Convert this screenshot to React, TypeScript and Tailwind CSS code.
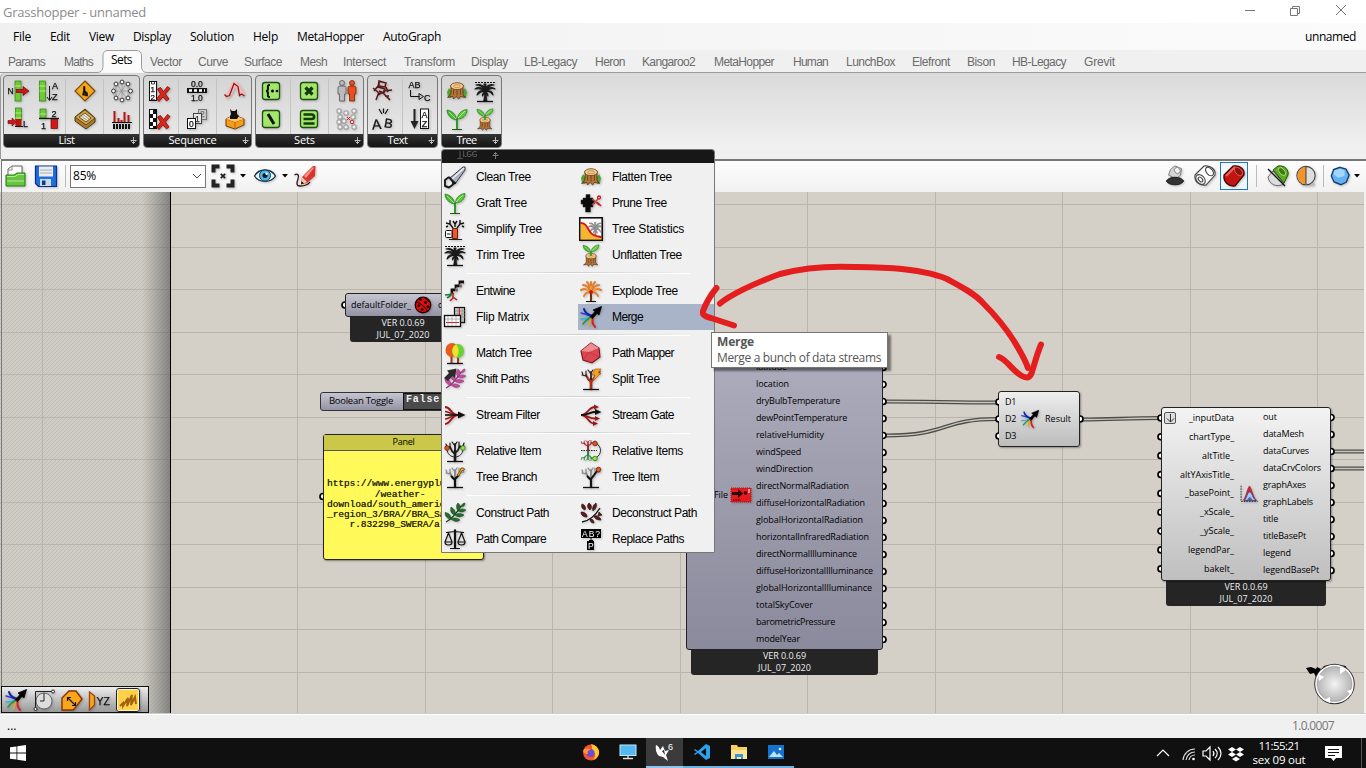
import React from "react";

let ruler: CanvasRenderingContext2D | null = null;

/** A run of text tracked so that it fills the given width. */
function Fit({ t, w, font, className = "" }: { t: string; w: number; font: string; className?: string }) {
  if (!ruler) ruler = document.createElement("canvas").getContext("2d");
  ruler!.font = font;
  const spacing = (w - ruler!.measureText(t).width) / t.length;
  return (
    <span className={"inline-block whitespace-pre " + className} style={{ font, letterSpacing: spacing, width: w, lineHeight: "16px" }}>
      {t}
    </span>
  );
}

const UI = '12px "Open Sans", sans-serif';
const SANS = '12px "Liberation Sans", sans-serif';
const NODE = '9px "Open Sans", sans-serif';

const leafPair = (
  <g>
    <path d="M11.500 13C6 12 2 8 2 3c5 1 9 4 9.500 10Z" fill="#49b834" stroke="#1c7a1c" strokeWidth=".7" />
    <path d="M12.500 12c0-5 4-9 9.500-9.500C22 8 18 12 12.500 12Z" fill="#5cc93f" stroke="#1c7a1c" strokeWidth=".7" />
    <path d="M4 5l7 7M20 4l-7 7" stroke="#b4ef83" strokeWidth=".9" />
  </g>
);
const bareTree = (c: string) => (
  <g fill="none" stroke={c} strokeLinecap="round">
    <path d="M12 22V12" strokeWidth="2.6" />
    <path d="M12 15C9 13 8 11 7 8M12 14c3-2 4-4 5-7M12 12V5" strokeWidth="1.8" />
    <path d="M7 9L3 8M7 8V4M17 8l4-1M16 8l0-5M12 7l-3-4M12 6l2-3M4 8L3 5M20 7l1-3" strokeWidth="1.2" />
  </g>
);
const ground = <path d="M4 22.500h16" stroke="#111" strokeWidth="1.300" />;
const palm = (c: string) => (
  <g fill={c} stroke={c} strokeLinejoin="round">
    <path d="M10.500 22c1-4 1-8 .5-11h2c.5 4 .5 7 1 11Z" strokeWidth=".5" />
    <path d="M12 11C9 8 5 7.500 2 10c4-1 7 0 9 2-3-1-6 0-7 4 3-3 6-4 8-3-2 1-3 2-2.500 4 1-2 2-3 2.500-3 .5 0 2 1 3 3 0-2-1-3-2-4 2-1 5 0 7 3 0-3-3-5-6-4 2-2 5-3 8-2-2-2-6-2-8 0 2-3 4-4 7-4-3-1-7 0-9 4 0-2 1-4 1-5l-2 0c0 1 0 3 1 5-2-4-5-5-9-4 4 0 7 2 8 4Z" strokeWidth="1.100" />
  </g>
);
const stump = (y: number, s: number) => (
  <g transform={`translate(${12 - 12 * s} ${y}) scale(${s})`}>
    <path d="M5 5v9c-1 3-2 4-4 5l6-1 1 3 3-3 3 3 2-3 6 1c-3-2-3-3-3-6V5Z" fill="#b3743a" stroke="#532c0c" strokeWidth=".9" />
    <path d="M8 10v6M12 10v7M16 9v7" stroke="#6b3f18" strokeWidth="1" />
    <ellipse cx="12" cy="6" rx="7.500" ry="4" fill="#efca8a" stroke="#6d3d12" strokeWidth=".9" />
    <ellipse cx="12" cy="6" rx="3.800" ry="1.800" fill="none" stroke="#b98046" strokeWidth=".8" />
  </g>
);
const branch = (c: string, d: string) => (
  <g>
    <path d="M3 21C9 18 13 13 18 5" fill="none" stroke={d} strokeWidth="1.300" />
    <path
      d="M8 18C4 18 2 15 2 11.500 6 12 8 14 8 18ZM12 14c-4-1-5-4-4-8 3 2 5 4 4 8ZM15 10c-2-3-2-6 0-8 3 3 3 5 0 8ZM8 18c3 3 7 3 9 1-2-2-6-3-9-1ZM12 14c3 3 7 2 9 0-3-2-7-2-9 0ZM15 10c3 2 6 1 8-1-3-2-6-1-8 1ZM18 6c0-2 2-4 4-4 0 3-2 4-4 4Z"
      fill={c}
      stroke={d}
      strokeWidth=".5"
    />
  </g>
);
const mergeShape = (
  <g fill="none" strokeLinecap="round">
    <path d="M2 8c4 1 8 2 11 4" stroke="#2f3fe0" strokeWidth="1.400" />
    <path d="M2 14c4 0 8-1 11-2" stroke="#2bb5d8" strokeWidth="1.400" />
    <path d="M4 19c3-4 6-6 9-7" stroke="#1d9c2c" strokeWidth="1.600" />
    <path d="M10 21c0-4 1-6 4-9" stroke="#eda11d" strokeWidth="1.500" />
    <path d="M16 22c-3-3-3-7-2-11" stroke="#dd1f1f" strokeWidth="2" />
    <path d="M5 4c1 4 4 6 9 7" stroke="#1423a5" strokeWidth="2" />
    <path d="M11.500 11.500l4.500-5-2-1.500L22.500 1.500 20 10l-2-1.500L13.500 13.500Z" fill="#000" stroke="#000" strokeWidth=".8" strokeLinejoin="round" />
  </g>
);
const redX = (
  <path d="M10.500 10l3-1.500 3 4 4-5 2.500 2-4.500 5.500 3.500 5-2.500 2-3.500-4-4 4.500-2.500-2.500 4-5Z" fill="#d7261d" stroke="#7a0c08" strokeWidth=".8" />
);
const greenTile = (inner: React.ReactNode) => (
  <g>
    <rect x="3.500" y="3.500" width="17" height="17" rx="2.500" fill="#a3e66b" stroke="#1d4d14" strokeWidth="1.300" />
    {inner}
  </g>
);
const greenCells = (x: number, y: number, h: number) => (
  <g>
    <rect x={x} y={y} width="6" height={h} fill="#6ecb35" stroke="#2e7f16" strokeWidth=".7" />
    <path d={`M${x} ${y + 5}h6M${x} ${y + 10}h6`} stroke="#b4f07f" strokeWidth="1" />
  </g>
);
const gl = (x: number, y: number, s: string, size = 9, fill = "#111") => (
  <text x={x} y={y} fontSize={size} fill={fill} stroke={fill} strokeWidth=".25" fontFamily="Liberation Sans, sans-serif">
    {s}
  </text>
);

const art: Record<string, React.ReactNode> = {
  saw: (
    <g>
      <path d="M7 13L20 2l2 0v3L12 19Z" fill="#aab0bd" stroke="#343a48" strokeWidth="1" />
      <path d="M9 14L21 3" stroke="#e8edf5" strokeWidth="1.600" />
      <path d="M6 12L2 15v6l4 1.500 4-3v-3l3 2" fill="none" stroke="#1a1a1a" strokeWidth="1.900" strokeLinejoin="round" />
      <path d="M6 12l6 7" stroke="#1a1a1a" strokeWidth="2" />
    </g>
  ),
  graft: (
    <g>
      <path d="M12 22V12" stroke="#2f9a26" strokeWidth="2" />
      {leafPair}
      <path d="M7 22.500h10" stroke="#245a1c" strokeWidth="1" />
    </g>
  ),
  simplify: (
    <g>
      <g fill="none" stroke="#111" strokeWidth="1.400">
        <path d="M10 11L7 7 3 6M7 7V3M5 9L3 10M14 11l3-4 4-1M17 7V3M19 9l2 1M12 10V7l-2-3M12 7l2-3" />
      </g>
      <path d="M9.500 21.500V11.500h5v10Z" fill="#ea5731" stroke="#7a1d0b" />
      <rect x="2.500" y="13.500" width="6.500" height="7" rx="1" fill="#fff" stroke="#111" />
      <path d="M4 17h3.500" stroke="#111" />
      <path d="M6 22.500h13" stroke="#222" />
    </g>
  ),
  trim: (
    <g>
      <path d="M2 3.500h20" stroke="#111" strokeWidth="1.200" strokeDasharray="2 1" />
      {palm("#191919")}
      {ground}
    </g>
  ),
  flatten: (
    <g>
      <path d="M4 9l-2 4 1 5 3 1 1-6ZM20 9l2 4-1 5-3 1-1-6Z" fill="#4ba535" />
      {stump(2, 0.86)}
    </g>
  ),
  prune: (
    <g>
      <path d="M6.500 21v-5H4v-3H2V9h2V7h3V3.500h4V7h3v2h1.500v4H14v3h-2.500v5Z" fill="#0a0a0a" stroke="#333" strokeWidth=".5" />
      <path d="M13 8l7 6M13 14l6-6" stroke="#b54040" strokeWidth="1.400" />
      <circle cx="20" cy="6.500" r="1.500" fill="none" stroke="#c81c1c" strokeWidth="1.300" />
      <path d="M18 11l4 4" stroke="#c81c1c" strokeWidth="1.600" />
    </g>
  ),
  stats: (
    <g>
      <rect x=".7" y=".7" width="22.600" height="22.600" fill="#fafafa" stroke="#111" strokeWidth="1.300" />
      <g transform="translate(8 1) scale(.68 .9)">{palm("#8c8c8c")}</g>
      <path d="M1.500 6c5 0 6 3 9 8s6 5 12 6v3h-21Z" fill="#f4b530" />
      <path d="M1.500 6c5 0 6 3 9 8s6 5 12 6" fill="none" stroke="#d71414" strokeWidth="1.800" />
      <rect x=".7" y=".7" width="22.600" height="22.600" fill="none" stroke="#111" strokeWidth="1.300" />
    </g>
  ),
  unflatten: (
    <g>
      {stump(9, 0.68)}
      <path d="M12 13V8" stroke="#2f9a26" strokeWidth="1.600" />
      <g transform="translate(2.400 0) scale(.8 .72)">{leafPair}</g>
    </g>
  ),
  entwine: (
    <g fill="none">
      <path d="M21 3h-4v4h-4v4H9v4" stroke="#111" strokeWidth="2.800" />
      <path d="M20 5h-3v4h-4v4h-3" stroke="#f6d6c8" strokeWidth=".8" />
      <path d="M9 14c-2 3-4 1-7 2M9 14c-1 4-4 4-5 5" stroke="#217a3c" strokeWidth="1.600" />
      <path d="M10 14v5l-3 3M10 18l4 3" stroke="#b92020" strokeWidth="1.500" />
    </g>
  ),
  flip: (
    <g>
      <rect x="11.500" y="2.500" width="10" height="15" fill="#ccc" stroke="#111" strokeWidth="1.200" />
      <path d="M12 6h10M12 9h10M12 12h10M15 3v14M19 3v14" stroke="#888" strokeWidth=".7" />
      <path d="M16.500 3v7" stroke="#c22" />
      <rect x="1.500" y="10.500" width="16" height="11" fill="#fff" stroke="#111" strokeWidth="1.300" />
      <path d="M5 11v10M9 11v10M13 11v10M2 14h15" stroke="#999" strokeWidth=".7" />
      <path d="M3 17.500h13" stroke="#d22" />
    </g>
  ),
  explode: (
    <g>
      <path d="M12 22v-9" stroke="#6f3311" strokeWidth="2" />
      <g fill="none" stroke="#e67d2c" strokeWidth="2" strokeLinecap="round">
        <path d="M12 13C9 10 6 9 2 11M12 13c3-3 6-4 10-2M12 13C10 8 7 6 4 6M12 13c2-5 5-7 8-7M12 13C11 8 10 5 8 3M12 13c1-5 2-8 4-10M12 13V3M12 13c-4 0-6 1-7 4M12 13c4 0 6 1 7 4" />
      </g>
      <path d="M12 13l-6-4M12 13l6-4M12 12V7" stroke="#f7ae43" />
      <circle cx="12" cy="13" r="2" fill="#c21e0e" />
      <path d="M7 22.500h10" stroke="#111" />
    </g>
  ),
  merge: mergeShape,
  match: (
    <g>
      <path d="M8.500 13v9M15 14v8" stroke="#a2381b" strokeWidth="2" />
      <ellipse cx="9" cy="9" rx="6.500" ry="7" fill="#e75c1c" />
      <ellipse cx="15" cy="10" rx="6" ry="7" fill="#67d231" />
      <path d="M13 3.500c3.500 3 3.500 10 0 13-5-3-5-10 0-13Z" fill="#f5df2c" />
      {ground}
    </g>
  ),
  shift: (
    <g>
      {branch("#c04d9f", "#8c246c")}
      <path d="M1 11l5-5-2-2.500 9.500-2L12 11 9.500 9 5 14Z" fill="#2b2b2b" />
    </g>
  ),
  mapper: (
    <g>
      <path d="M12 2l8 5 1 9-8 6-9-3-2-9Z" fill="#dc4650" stroke="#71161b" strokeWidth="1.100" />
      <path d="M12 2l8 5-10 4-8-1Z" fill="#f08c90" />
      <path d="M10 11l10 5M10 11L4 19" stroke="#b8353d" strokeWidth=".8" />
    </g>
  ),
  split: (
    <g>
      {bareTree("#3b2222")}
      <path d="M12 22v-8M12 15l4-4M12 15L8 10" stroke="#c62d12" strokeWidth="1.800" />
      <path d="M16 2h6l-3 4h3l-8 8 2-6h-3Z" fill="#f6a01f" stroke="#b75d0a" strokeWidth=".7" />
      {ground}
    </g>
  ),
  filter: (
    <g fill="none" strokeWidth="2">
      <path d="M2 4c6 0 6 8 13 8M2 21c6 0 6-9 13-9" stroke="#9a1818" />
      <path d="M2 8.500c5 0 6 3.500 12 3.500M2 16c5 0 6-4 12-4" stroke="#9a1818" strokeWidth="1.600" />
      <path d="M2 12h14" stroke="#111" strokeWidth="1.600" />
      <path d="M15 8.500l7.500 3.500-7.500 3.500Z" fill="#111" />
    </g>
  ),
  gate: (
    <g fill="none" strokeWidth="1.800">
      <path d="M2 12c7 0 7-8 14-8M2 12c7 0 7 3.500 14 3.500M2 12c7 0 7 8.500 13 8.500" stroke="#9a1818" />
      <path d="M2 12c7 0 9-3 14-3" stroke="#111" strokeWidth="2" />
      <path d="M15 1.500l5 2.500-5 2.500ZM16 13l5 2.500-5 2.500ZM14 18l5 2.500-5 2.500Z" fill="#9a1818" />
      <path d="M16 6l6.500 3-6.500 3Z" fill="#111" />
    </g>
  ),
  relitem: (
    <g>
      {bareTree("#191919")}
      <path d="M4 10c0 5 4 8 8 8s8-3 8-8" fill="none" stroke="#222" />
      <circle cx="4" cy="9" r="2.300" fill="#ea5425" stroke="#6b1e08" strokeWidth=".8" />
      <circle cx="20" cy="9" r="2.300" fill="#8ee83d" stroke="#2f6e0b" strokeWidth=".8" />
      {ground}
    </g>
  ),
  relitems: (
    <g>
      <g transform="translate(0 0) scale(.75 .5)">{bareTree("#a02525")}</g>
      <g transform="translate(0 23) scale(.75 -.5)">{bareTree("#26853d")}</g>
      <path d="M2 11.500h16" stroke="#222" strokeDasharray="1.500 1" />
      <path d="M17 4c6 4 6 11 0 15" fill="none" stroke="#222" />
      <circle cx="16" cy="4.500" r="2.300" fill="#ea5425" stroke="#6b1e08" strokeWidth=".8" />
      <circle cx="16" cy="19.500" r="2.300" fill="#8ee83d" stroke="#2f6e0b" strokeWidth=".8" />
    </g>
  ),
  tbranch: (
    <g>
      {bareTree("#888")}
      <path d="M12 22v-8l4-4M12 15l-4-4" fill="none" stroke="#111" strokeWidth="2" />
      <path d="M14 10l3-4 1-3 2.500 0 1 1.500-3 1.500-2.500 5Z" fill="#f2b32a" stroke="#7b4b06" strokeWidth=".9" />
      {ground}
    </g>
  ),
  titem: (
    <g>
      {bareTree("#888")}
      <path d="M12 22v-8l6-8M12 15l-4-4" fill="none" stroke="#111" strokeWidth="1.900" />
      <circle cx="19.500" cy="4.500" r="2.300" fill="#ea5425" stroke="#6b1e08" strokeWidth=".8" />
      {ground}
    </g>
  ),
  construct: branch("#236d2c", "#123a17"),
  deconstruct: (
    <g>
      <path d="M3 21c7-1 13-6 18-14" fill="none" stroke="#111" strokeWidth="1.400" />
      <path
        d="M3 3c3 1 4 3 3 6-3-1-4-3-3-6ZM10 2c3 2 3 5 1 7-3-2-3-5-1-7ZM17 2c1 3 0 6-3 8-1-3 0-6 3-8ZM2 11c4 0 6 2 6 5-4 0-6-2-6-5ZM15 15c3-1 6 1 7 4-4 0-6-1-7-4ZM11 18c3 0 4 2 4 4-3 0-4-2-4-4ZM20 11l3 3-4 1Z"
        fill="#5a1d1d"
        stroke="#2e0c0c"
        strokeWidth=".7"
      />
    </g>
  ),
  compare: (
    <g fill="none" stroke="#111" strokeWidth="1.200">
      <path d="M12 2v19M7 21.500h10M3 5.500c4 0 5-1 9-1s5 1 9 1M5.500 6L2 15M5.500 6L9 15M18.500 6L15 15M18.500 6L22 15" />
      <path d="M2 15c0 4 7 4 7 0ZM15 15c0 4 7 4 7 0Z" fill="#ddd" />
      <path d="M12 3v18" strokeWidth="2.200" />
    </g>
  ),
  replace: (
    <g>
      <rect x="2" y="2" width="20" height="9" fill="#000" />
      <text x="3" y="9.500" fontSize="8.500" fill="#fff" fontFamily="Liberation Sans" textLength="18">AB?</text>
      <path d="M12 11v4M10 13l2 2 2-2" stroke="#000" />
      <rect x="8" y="14" width="7" height="9" fill="#000" />
      <text x="9" y="21.500" fontSize="8.500" fill="#fff" fontFamily="Liberation Sans">P</text>
    </g>
  ),
  listitem: (
    <g>
      {greenCells(8, 2, 20)}
      {gl(0.500, 15, "N", 8.500)}
      <path d="M9 10.500h7v-3l6 4.500-6 4.500v-3H9Z" fill="#d0161a" stroke="#6d0606" strokeWidth=".7" />
    </g>
  ),
  sort: (
    <g>
      {greenCells(2.500, 2, 20)}
      <path d="M12.500 7v14M10 18l2.500 3.500 2.500-3.500" stroke="#111" fill="none" />
      {gl(15, 9.500, "A")}
      {gl(15, 20.500, "Z")}
    </g>
  ),
  weave: (
    <g>
      <path d="M12 2l10 10-10 10L2 12Z" fill="#f4a61d" stroke="#7d4b05" strokeWidth="1.200" />
      <path d="M9.500 16l1-4V7.500h1.500v4l2.500 2.500v3h-2v-2l-1-1.500v3Z" fill="#111" stroke="#111" strokeWidth=".6" />
    </g>
  ),
  net: (
    <g>
      <path d="M6 4l11 0 4 8-4 8H6L2 12ZM6 4l11 16M17 4L6 20M2 12h20M12 2v20M6 4v16M18 4v16" fill="none" stroke="#888" strokeWidth=".6" />
      {[[6, 5], [12, 3], [18, 5], [3.500, 12], [20.500, 12], [6, 19], [12, 21], [18, 19]].map(([x, y]) => (
        <circle key={x + "-" + y} cx={x} cy={y} r="1.900" fill="#fff" stroke="#222" strokeWidth=".9" />
      ))}
    </g>
  ),
  length: (
    <g>
      {greenCells(8.500, 1, 12)}
      <rect x="8.500" y="12" width="6" height="7" fill="#b81414" />
      <path d="M1 13.500h4v-2.500l4.500 4-4.500 4v-2.500H1Z" fill="#d0161a" stroke="#6d0606" strokeWidth=".6" />
      <path d="M8 19.500h8" fill="none" stroke="#111" />
      {gl(16, 19.500, "L", 9)}
    </g>
  ),
  partition: (
    <g>
      {greenCells(3, 2, 9)}
      <path d="M2 11.500h20" stroke="#111" strokeWidth="1.300" />
      <rect x="14" y="12.500" width="6.500" height="9" fill="#d41818" stroke="#710909" strokeWidth=".7" />
      {gl(14.500, 9.500, "2", 9)}
      {gl(4, 21.500, "1", 9)}
    </g>
  ),
  box3d: (
    <g>
      <path d="M2 10l10-8 10 9v4l-9 7L2 14Z" fill="#a77c2b" stroke="#50360b" />
      <path d="M2 10l10-7 10 8-9 7Z" fill="#cfa64c" stroke="#50360b" strokeWidth=".8" />
      <path d="M6 10l6-4 6 5-5 4Z" fill="#e9e4d2" stroke="#50360b" strokeWidth=".8" />
      <path d="M8 9l7 5M10 7.500l7 5" stroke="#8f8463" strokeWidth=".7" />
    </g>
  ),
  bars: (
    <g>
      <path d="M4.500 15V4M8.500 15v-4M14.500 15V5M18.500 15V8M11.500 15v-2" stroke="#b71414" strokeWidth="2" />
      <path d="M2 15.500h20" stroke="#111" />
      <path d="M3 19.500h18" stroke="#111" strokeWidth="5" strokeDasharray="2 1" />
    </g>
  ),
  cull: (
    <g>
      <rect x="2.500" y="2.500" width="7" height="19" fill="#fff" stroke="#111" />
      <path d="M4.500 3v2h3V3" fill="none" stroke="#111" strokeWidth=".8" />
      {gl(3.500, 13, "1", 8)}
      {gl(3.500, 20.500, "2", 8)}
      {redX}
    </g>
  ),
  pattern: (
    <g>
      <rect x="2.500" y="2.500" width="7" height="19" fill="#fff" stroke="#111" />
      <path d="M6 3h3v4H6zM3 7h3v4H3zM6 11h3v4H6zM3 15h3v4H3zM6 19h3v2H6z" fill="#111" />
      {redX}
    </g>
  ),
  range: (
    <g>
      {gl(6, 7.500, "0.0", 8.500)}
      <rect x="2" y="9" width="20" height="5" fill="#111" />
      <path d="M4 11.500h16" stroke="#fff" strokeWidth="2.500" strokeDasharray="3 2" />
      {gl(6, 22, "1.0", 8.500)}
    </g>
  ),
  series: (
    <g>
      <rect x="13.500" y="2.500" width="8" height="10" fill="#ccc" stroke="#777" />
      {gl(15, 10, "2", 8.500, "#777")}
      <rect x="8.500" y="6.500" width="8" height="10" fill="#e8e8e8" stroke="#444" />
      {gl(10, 14.500, "1", 8.500, "#333")}
      <rect x="2.500" y="11.500" width="8" height="10" fill="#fff" stroke="#111" />
      {gl(4, 19.800, "0", 8.500)}
    </g>
  ),
  jitter: (
    <g fill="none">
      <path d="M3 17c5 0 6-12 9-12s4 9 9 11" stroke="#f3b8b8" strokeWidth="5" />
      <path d="M1.500 15.500l2 2 3-1 4.500-12 4 3 1.500 9 2-1.500 3 2" stroke="#8c1515" strokeWidth="1.300" />
    </g>
  ),
  cat: (
    <g>
      <path d="M3 12l8-4 10 4v6l-9 4-9-3Z" fill="#f59c1b" stroke="#6f3b04" />
      <path d="M3 12l9 3 9-3M12 15v7" stroke="#ad640c" fill="none" />
      <path d="M3 12l8-4 10 4-9 3Z" fill="#ffc562" />
      <path d="M7 12V9l1-2-1-5 2 2h3l2-2v5l2 2-2 3Z" fill="#111" />
    </g>
  ),
  setA: greenTile(<g><path d="M11 6c-3 0-2 2-2 3.500S8 12 7 12c1 0 2 1 2 2.500S8 18 11 18" fill="none" stroke="#111" strokeWidth="2" /><circle cx="13.500" cy="12" r="1.500" /><circle cx="18" cy="12" r="1.300" /></g>),
  setX: greenTile(<path d="M8.500 8.500l7 7M15.500 8.500l-7 7" stroke="#123a0b" strokeWidth="3.200" />),
  setD: greenTile(<path d="M9 7l6 10" stroke="#111" strokeWidth="3" />),
  setS: greenTile(<path d="M6.500 7.500h8c3.500 0 3.500 4.500 0 4.500h-8M6.500 16.500h11" fill="none" stroke="#123a0b" strokeWidth="2.600" />),
  people: (
    <g>
      <g fill="#bbb" stroke="#555" strokeWidth=".8">
        <circle cx="7" cy="4" r="2.500" />
        <path d="M3 8.500c0-1 1-1.500 4-1.500s4 .5 4 1.500V15H9.500v7h-5v-7H3Z" />
      </g>
      <g fill="#e9501f" stroke="#7a1f05" strokeWidth=".8">
        <circle cx="17" cy="4" r="2.500" />
        <path d="M13 8.500c0-1 1-1.500 4-1.500s4 .5 4 1.500V15h-1.500v7h-5v-7H13Z" />
      </g>
    </g>
  ),
  scatter: (
    <g fill="#eee" stroke="#888" strokeWidth=".9">
      {[[2, 2], [9, 4], [17, 2], [3, 8], [16, 8], [2, 13], [7, 12], [3, 18], [9, 18], [17, 18]].map(([x, y]) => (
        <rect key={x + "-" + y} x={x} y={y} width="4" height="4" rx="1" />
      ))}
      <path d="M12 10l3 3M15 10l-3 3" stroke="#c00" />
      <circle cx="17" cy="15" r="1.800" stroke="#c00" />
    </g>
  ),
  chars: (
    <g fill="none" stroke="#5a1616" strokeWidth="1.500">
      <path d="M8 2l7 2-1 4-6-1ZM8 2L7 9M7 8l7 2-1 4-5-2M2 9l6 5M3 12l4-5M12 12l9-1M15 8l2 5M8 13l-3 8M12 13l-5 3M12 14l7 7M14 17l4 0" />
    </g>
  ),
  concat: (
    <g>
      {gl(0.500, 8.500, "AB", 9)}
      <path d="M2.500 11v6.500h9M11 14.500l4.500 3-4.500 3Z" fill="none" stroke="#111" />
      {gl(16, 21.500, "C", 9)}
    </g>
  ),
  ab: (
    <g>
      <path d="M8 2l3 5M12.500 1.500V6M17 2l-3 5" stroke="#111" strokeWidth="1.200" />
      <g transform="rotate(-4 8 20)">{gl(1, 22, "A", 14)}</g>
      <g transform="rotate(10 18 20)">{gl(12.500, 21, "B", 13)}</g>
    </g>
  ),
  textsort: (
    <g>
      <path d="M6.500 2v14" stroke="#222" strokeWidth="2" />
      <path d="M2.500 14h8l-4 8Z" fill="#222" />
      <rect x="12.500" y="2" width="8" height="19.500" fill="#fff" stroke="#111" />
      {gl(13.500, 10.500, "A")}
      {gl(13.800, 20, "Z")}
    </g>
  ),
  open: (
    <g>
      <path d="M4 12V5l4-3h10v10Z" fill="#fff" stroke="#666" />
      <path d="M4 6l4 0V2" fill="none" stroke="#888" />
      <path d="M2 22V11h8l3-2h8v13Z" fill="#67c441" stroke="#1e7d16" />
      <path d="M3 12.500h8l3-2h6M3 17h17" stroke="#b4ec90" fill="none" />
    </g>
  ),
  save: (
    <g>
      <path d="M1.500 2h21v20.500h-18l-3-3Z" fill="#1d6fdf" stroke="#0c2f80" strokeWidth="1.200" />
      <rect x="5" y="2.500" width="14" height="10" fill="#eceff2" />
      <path d="M6 6h12M6 9h12" stroke="#aaa" />
      <rect x="6" y="15" width="11" height="7" fill="#ccd8e6" />
      <rect x="8" y="16.500" width="3.500" height="4.500" fill="#123a8a" />
    </g>
  ),
  extents: (
    <g stroke="#222" fill="none">
      <path d="M2.500 8.500v-6h6M15.500 2.500h6v6M21.500 15.500v6h-6M8.500 21.500h-6v-6" strokeWidth="4" />
      <path d="M9.800 9.800l4.400 4.400M14.200 9.800l-4.400 4.400" strokeWidth="1.800" />
    </g>
  ),
  eye: (
    <g>
      <path d="M1.500 12C6 4 18 4 22.500 12 18 19 6 19 1.500 12Z" fill="#e7f5fc" stroke="#16323e" strokeWidth="1.300" />
      <circle cx="12" cy="11.500" r="5.500" fill="#53b5e6" stroke="#114565" />
      <circle cx="12" cy="11.500" r="2.500" fill="#071724" />
      <circle cx="13.500" cy="9.800" r="1.200" fill="#fff" />
    </g>
  ),
  sketch: (
    <g>
      <path d="M1.500 11c3-2 5 0 3.500 4s-2 7 2 7 8-1 10-4" fill="none" stroke="#3a1010" strokeWidth="1.300" />
      <path d="M8 20l1-7L20 2l2.500 0L22 12l-8 7Z" fill="#d8352e" />
      <path d="M11 12L20 3l1 1-8 10Z" fill="#ff9184" />
      <path d="M8 20.500l1-7.500 5 5Z" fill="#f5cba3" />
      <path d="M8 20.500l.5-3.500 2.500 2.500Z" fill="#111" />
    </g>
  ),
  hat: (
    <g>
      <path d="M5 11l2-6 5-4 7 3-1 7-5 4Z" fill="#d5d5d5" stroke="#777" />
      <ellipse cx="14.500" cy="6" rx="3" ry="3.500" transform="rotate(-40 14.500 6)" fill="#f2f2f2" stroke="#888" />
      <path d="M2.500 17.500c3-5.500 16-5.500 19 0-3 5.500-16 5.500-19 0Z" fill="#333" stroke="#111" />
    </g>
  ),
  wirecyl: (
    <g fill="none" stroke="#444" strokeWidth="1.100">
      <path d="M2 11L11 2c7-1 12 4 11 9l-9 10C6 22 1 17 2 11Z" fill="#fff" />
      <ellipse cx="7.500" cy="15.500" rx="4" ry="5.500" transform="rotate(-42 7.500 15.500)" />
      <ellipse cx="7.500" cy="15.500" rx="1.800" ry="2.800" transform="rotate(-42 7.500 15.500)" />
      <ellipse cx="16.500" cy="7.500" rx="3" ry="5" transform="rotate(-42 16.500 7.500)" />
    </g>
  ),
  redcyl: (
    <g>
      <path d="M2 11L11 2c7-1 12 3 11 9l-9 11C7 23 1 18 2 11Z" fill="#c41411" stroke="#430503" strokeWidth="1.200" />
      <path d="M4 12l9-9" stroke="#e4695d" strokeWidth="2" />
      <ellipse cx="16.500" cy="7.500" rx="3" ry="5" transform="rotate(-42 16.500 7.500)" fill="#8a1310" stroke="#e4695d" strokeWidth=".8" />
    </g>
  ),
  greencyl: (
    <g>
      <path d="M2 13l5-6 11 13c-8 4-15 0-16-7Z" fill="#ddd" stroke="#666" />
      <path d="M7 6l5-4c7-1 11 4 10 9l-4 8Z" fill="#5dab22" stroke="#1f5008" />
      <ellipse cx="16" cy="7.500" rx="2.700" ry="4.700" transform="rotate(-42 16 7.500)" fill="#3c7d18" stroke="#b8ea76" strokeWidth=".8" />
      <path d="M2 5l17 17" stroke="#111" strokeWidth="1.300" />
    </g>
  ),
  ball: (
    <g>
      <ellipse cx="14" cy="21" rx="8" ry="2" fill="#bbb" />
      <circle cx="12" cy="11.500" r="10" fill="#dedede" stroke="#444" strokeWidth="1.200" />
      <path d="M12 2a9.500 9.500 0 0 0 0 19Z" fill="#ef952c" />
      <path d="M12 2v19" stroke="#333" />
    </g>
  ),
  gem: (
    <g>
      <path d="M12 2.500l6.500 2L22 11l-3 7.500-6 3-7.500-3L2.500 12 5 5Z" fill="#62b1f3" stroke="#153b6b" strokeWidth="1.400" />
      <path d="M12 4l5 2 0 6-7 2-5-4 1-4Z" fill="#a5d6fb" />
    </g>
  ),
  arcdim: (
    <g fill="none" stroke="#222" strokeWidth="1">
      <circle cx="12" cy="13" r="8" fill="#ddd" stroke="#666" />
      <path d="M3.500 21V3.500H20M12 5v8M8 13h4" />
      <circle cx="21" cy="3.500" r="1.500" fill="#fff" />
      <circle cx="3.500" cy="21" r="1.500" fill="#fff" />
    </g>
  ),
  orange: (
    <g>
      <path d="M2 22V10l7-7h7l6 8-7 9-2 2Z" fill="#f8a61b" stroke="#8a3104" strokeWidth="1.400" />
      <path d="M7.500 9.500l8 8M7.500 13V9.500H11M15.500 14v3.500H12" fill="none" stroke="#111" strokeWidth="1.100" />
    </g>
  ),
  yz: (
    <g>
      <path d="M1.500 4l5 4v9l-5 5Z" fill="#f8a61b" stroke="#a0440a" strokeWidth="1.300" />
      {gl(8.500, 16.500, "YZ", 10.500)}
    </g>
  ),
  scribble: (
    <g>
      <rect x="1" y="1" width="22" height="22" rx="2" fill="#ffd04a" stroke="#fff" strokeWidth="1.500" />
      <rect x=".5" y=".5" width="23" height="23" rx="2.500" fill="none" stroke="#222" />
      <path d="M4 18l3-3 0 3 5-8-1 8 5-11-1 10 4-8 1 7" fill="none" stroke="#a2610c" strokeWidth="1.900" />
    </g>
  ),
  ladybug: (
    <g>
      <circle cx="12" cy="12" r="9.300" fill="#e00d0d" stroke="#270000" strokeWidth="1.600" />
      <path d="M4 8c4 1 11 7 14 12M14 3l5 5" stroke="#270000" fill="none" strokeWidth="1.300" />
      <g fill="#1b0000"><circle cx="9" cy="5.500" r="1.700" /><circle cx="15" cy="9" r="1.800" /><circle cx="18" cy="14" r="1.700" /><circle cx="7" cy="13" r="1.700" /><circle cx="11" cy="17.500" r="1.700" /></g>
    </g>
  ),
  importer: (
    <g>
      <rect x="2" y="5" width="20" height="14" fill="#e51b1f" stroke="#b01316" strokeDasharray="1 1" />
      <path d="M3 9h6V6l5 4.500-5 4.500v-3H3Z" fill="#2b0505" />
      <circle cx="16.500" cy="10" r="1.800" fill="#2b0505" />
      <path d="M4 17h8" stroke="#2b0505" strokeDasharray="1.500 1" />
      <path d="M20 6v4" stroke="#fff" />
    </g>
  ),
  curve: (
    <g>
      <path d="M5 20c4-3 5-15 8-17 3 1 4 13 9 17Z" fill="#c22a3a" />
      <path d="M7 20c3-2 3-9 6.500-10 3 1 3 8 7.500 10Z" fill="#a9c8ee" stroke="#33428e" strokeWidth="1" />
      <path d="M10 20c1-1 2-4 3.500-4s2 3 4 4Z" fill="#5560a8" />
      <path d="M3.500 3v18h19" fill="none" stroke="#222" strokeDasharray="2 1" />
    </g>
  ),
};

function Icon({ n, s = 24, className = "" }: { n: string; s?: number; className?: string }) {
  return (
    <svg viewBox="0 0 24 24" width={s} height={s} className={"block shrink-0 drop-shadow-[1px_1px_1px_rgba(0,0,0,0.22)] " + className}>
      {art[n]}
    </svg>
  );
}

const menus: [string, number][] = [["File", 18], ["Edit", 20], ["View", 25], ["Display", 38], ["Solution", 44], ["Help", 25], ["MetaHopper", 67], ["AutoGraph", 58]];
const tabs: [string, number, number][] = [
  ["Params", 8, 37], ["Maths", 64, 29], ["Sets", 111, 21], ["Vector", 150, 32], ["Curve", 198, 30], ["Surface", 244, 38], ["Mesh", 300, 27],
  ["Intersect", 343, 43], ["Transform", 404, 51], ["Display", 471, 37], ["LB-Legacy", 524, 53], ["Heron", 595, 30], ["Kangaroo2", 642, 53],
  ["MetaHopper", 714, 60], ["Human", 793, 35], ["LunchBox", 846, 49], ["Elefront", 912, 38], ["Bison", 967, 28], ["HB-Legacy", 1012, 54], ["Grevit", 1084, 31],
];

const groups: { name: string; lw: number; cls: string; cols: { cls: string; icons: string[] }[] }[] = [
  { name: "List", lw: 16, cls: "w-[137px]", cols: [
    { cls: "w-[28px]", icons: ["listitem", "length"] }, { cls: "w-[32px]", icons: ["sort", "partition"] },
    { cls: "w-[38px] border-l", icons: ["weave", "box3d"] }, { cls: "w-[37px] border-l", icons: ["net", "bars"] }] },
  { name: "Sequence", lw: 48, cls: "w-[109px]", cols: [
    { cls: "w-[33px] pr-[5px]", icons: ["cull", "pattern"] }, { cls: "w-[38px] border-l pr-[2px]", icons: ["range", "series"] }, { cls: "w-[36px] border-l", icons: ["jitter", "cat"] }] },
  { name: "Sets", lw: 21, cls: "w-[109px]", cols: [
    { cls: "w-[33px] pr-[5px]", icons: ["setA", "setD"] }, { cls: "w-[38px] border-l pr-[2px]", icons: ["setX", "setS"] }, { cls: "w-[36px] border-l", icons: ["people", "scatter"] }] },
  { name: "Text", lw: 20, cls: "w-[71px]", cols: [
    { cls: "w-[33px] pr-[5px]", icons: ["chars", "ab"] }, { cls: "w-[36px] border-l pr-[1px]", icons: ["concat", "textsort"] }] },
  { name: "Tree", lw: 20, cls: "w-[61px]", cols: [
    { cls: "w-[28px]", icons: ["flatten", "graft"] }, { cls: "w-[28px]", icons: ["trim", "unflatten"] }] },
];

type Cell = [string, string, number];
const menuSections: [Cell, Cell][][] = [
  [
    [["saw", "Clean Tree", 55], ["flatten", "Flatten Tree", 60]],
    [["graft", "Graft Tree", 51], ["prune", "Prune Tree", 55]],
    [["simplify", "Simplify Tree", 66], ["stats", "Tree Statistics", 72]],
    [["trim", "Trim Tree", 49], ["unflatten", "Unflatten Tree", 70]],
  ],
  [
    [["entwine", "Entwine", 39], ["explode", "Explode Tree", 66]],
    [["flip", "Flip Matrix", 53], ["merge", "Merge", 31]],
  ],
  [
    [["match", "Match Tree", 56], ["mapper", "Path Mapper", 62]],
    [["shift", "Shift Paths", 53], ["split", "Split Tree", 48]],
  ],
  [[["filter", "Stream Filter", 64], ["gate", "Stream Gate", 62]]],
  [
    [["relitem", "Relative Item", 65], ["relitems", "Relative Items", 71]],
    [["tbranch", "Tree Branch", 61], ["titem", "Tree Item", 47]],
  ],
  [
    [["construct", "Construct Path", 73], ["deconstruct", "Deconstruct Path", 85]],
    [["compare", "Path Compare", 70], ["replace", "Replace Paths", 72]],
  ],
];

const weather: [string, number][] = [
  ["latitude", 31], ["location", 33], ["dryBulbTemperature", 84], ["dewPointTemperature", 91], ["relativeHumidity", 68], ["windSpeed", 45], ["windDirection", 57],
  ["directNormalRadiation", 93], ["diffuseHorizontalRadiation", 109], ["globalHorizontalRadiation", 107], ["horizontalInfraredRadiation", 113],
  ["directNormalIlluminance", 101], ["diffuseHorizontalIlluminance", 117], ["globalHorizontalIlluminance", 116], ["totalSkyCover", 57], ["barometricPressure", 79], ["modelYear", 44],
];
const graphIn: [string, number][] = [["_inputData", 45], ["chartType_", 45], ["altTitle_", 32], ["altYAxisTitle_", 54], ["_basePoint_", 49], ["_xScale_", 34], ["_yScale_", 34], ["legendPar_", 46], ["bakeIt_", 30]];
const graphOut: [string, number][] = [["out", 14], ["dataMesh", 41], ["dataCurves", 46], ["dataCrvColors", 58], ["graphAxes", 43], ["graphLabels", 50], ["title", 15], ["titleBasePt", 43], ["legend", 28], ["legendBasePt", 56]];

const Port = ({ side, x, y }: { side: "l" | "r"; x: number; y: number }) => (
  <path d={side === "l" ? `M${x} ${y - 3}a3 3 0 0 0 0 6` : `M${x} ${y - 3}a3 3 0 0 1 0 6`} fill="#fff" stroke="#000" strokeWidth="1.700" />
);

const Version = ({ className }: { className: string }) => (
  <div className={"absolute flex flex-col items-center rounded-b-[3px] bg-[#252525] text-[#eee] " + className}>
    <Fit t="VER 0.0.69" w={43} font={NODE} className="h-[12px] leading-[12px]!" />
    <Fit t="JUL_07_2020" w={53} font={NODE} className="h-[11px] leading-[11px]!" />
  </div>
);

function Titlebar() {
  return (
    <div className="flex h-[23px] items-center bg-white pl-[3px] text-[#8c8c8c]">
      <Fit t="Grasshopper - unnamed" w={143} font={'13px "Open Sans", sans-serif'} />
      <svg className="ml-auto" width="123" height="23" fill="none" stroke="#777">
        <path d="M2 10.500h10M93 5l10 10M103 5l-10 10" />
        <path d="M47.500 8.500h7v7h-7zM49.500 8.500v-2h7v7h-2" />
      </svg>
    </div>
  );
}

function Tabs() {
  return (
    <div className="relative flex h-[23px] pl-[8px] text-[#6b6b6b]">
      <svg className="absolute left-0 top-0" width="1366" height="23">
        <path d="M0 22.500h97c5 0 6-3 6-8V6c0-4 2-5.500 5-5.500h28c4 0 5.500 2 5.500 5.500v9c0 5 1 7.500 6 7.500H1366" fill="#fbfbfb" stroke="#9b9b9b" />
      </svg>
      {tabs.map(([t, x, w], i) => (
        <div key={t} className={"relative flex shrink-0 items-start " + (t === "Sets" ? "text-black pt-[2px]" : "pt-[4px]")} style={{ width: (tabs[i + 1]?.[1] ?? 1300) - x }}>
          <Fit t={t} w={w} font={t === "Sets" ? UI : SANS} />
        </div>
      ))}
    </div>
  );
}

function Ribbon() {
  return (
    <div className="flex h-[86px] gap-[3px] rounded-tl-[5px] border-l border-[#999] bg-linear-to-b from-[#dadada] to-[#f0f0f0] to-85% pl-[2px] pt-[2px]">
      {groups.map((g) => (
        <div key={g.name} className={"flex h-[73px] shrink-0 flex-col overflow-hidden rounded-[4px] border border-[#777] bg-linear-to-b from-[#d4d4d4] to-[#ebebeb] " + g.cls}>
          <div className="flex h-[58px] pl-px pt-[3px]">
            {g.cols.map((c, i) => (
              <div key={i} className={"flex shrink-0 flex-col items-center gap-[4px] border-[#c4c4c4] " + c.cls}>
                {c.icons.map((n) => (
                  <Icon key={n} n={n} />
                ))}
              </div>
            ))}
          </div>
          <div className="relative flex h-[13px] items-center bg-linear-to-b from-[#333] to-[#151515] text-white">
            <div className="flex flex-1 justify-center pr-[10px]">
              <Fit t={g.name} w={g.lw} font={'11px "Open Sans", sans-serif'} className="h-[13px] leading-[12px]!" />
            </div>
            <svg width="9" height="9" className="absolute right-[1px]">
              <path d="M4.500 1v7M1.500 4.500h6M2.500 5.500l2 2 2-2" stroke="#bbb" fill="none" />
            </svg>
          </div>
        </div>
      ))}
    </div>
  );
}

const Caret = () => (
  <svg width="6" height="4" className="shrink-0">
    <path d="M0 0h6L3 3.500Z" fill="#000" />
  </svg>
);

function Toolbar() {
  return (
    <div className="ml-[1px] flex h-[33px] items-center border-t-2 border-l border-[#777] bg-linear-to-b from-[#fdfdfd] to-[#f1f1f1] pb-px pl-[2px]">
      <Icon n="open" />
      <Icon n="save" className="ml-[6px]" />
      <div className="ml-[7px] h-[22px] w-px bg-[#bbb]" />
      <div className="ml-[4px] flex h-[23px] w-[136px] items-center justify-between border border-[#777] bg-white pl-[2px] pr-[3px]">
        <Fit t="85%" w={23} font={UI} />
        <svg width="10" height="6" fill="none" stroke="#444">
          <path d="M1 1l4 4 4-4" />
        </svg>
      </div>
      <Icon n="extents" className="ml-[5px]" />
      <div className="ml-[5px]"><Caret /></div>
      <Icon n="eye" className="ml-[7px]" />
      <div className="ml-[5px]"><Caret /></div>
      <Icon n="sketch" className="ml-[5px]" />
      <div className="ml-auto flex items-center pr-[6px]">
        <Icon n="hat" s={22} />
        <Icon n="wirecyl" s={24} className="ml-[7px]" />
        <div className="ml-[3px] flex size-[28px] items-center justify-center border border-[#1979c8] bg-[#f2f7fb]">
          <Icon n="redcyl" />
        </div>
        <div className="ml-[8px] h-[22px] w-px bg-[#bbb]" />
        <Icon n="greencyl" className="ml-[9px]" />
        <Icon n="ball" s={22} className="ml-[5px]" />
        <div className="ml-[6px] h-[22px] w-px bg-[#bbb]" />
        <Icon n="gem" s={22} className="ml-[5px]" />
        <div className="ml-[3px]"><Caret /></div>
      </div>
    </div>
  );
}

const verticals = Array.from({ length: 11 }, (_, i) => 42 + Math.round(i * 127.5));
const horizontals = Array.from({ length: 12 }, (_, i) => 12 + Math.round(i * 42.5));

function Backdrop() {
  return (
    <svg className="absolute left-0 top-0" width="1364" height="521">
      <defs>
        <pattern id="hatch" width="4" height="4" patternUnits="userSpaceOnUse">
          <path d="M-1 1l2-2M0 4l4-4M3 5l2-2" stroke="#bdbab3" strokeWidth=".8" />
        </pattern>
        <linearGradient id="edge">
          <stop offset="0" stopColor="#555" stopOpacity="0" />
          <stop offset="1" stopColor="#4a4a4a" stopOpacity=".55" />
        </linearGradient>
      </defs>
      <rect width="1364" height="521" fill="#d4d0c8" />
      <rect width="170" height="521" fill="#cfccc4" />
      <rect width="170" height="521" fill="url(#hatch)" />
      <path d={verticals.map((x) => `M${x + 0.5} 0V521`).join("") + horizontals.map((y) => `M0 ${y + 0.5}H1364`).join("")} stroke="#b9b5ad" />
      <rect x="142" width="28" height="521" fill="url(#edge)" />
      <path d="M170.500 0V521" stroke="#000" />
      <path d="M1.500 0V521" stroke="#777" />
    </svg>
  );
}

function Wires() {
  const d = "M886 209.500C930 209.500 950 210.500 998 210.500M886 243.500C950 243.500 940 227 998 227M1083 227.500C1110 227.500 1130 226 1161 226M1334 259.500H1364M1334 276.500H1364";
  return (
    <svg className="absolute left-0 top-0" width="1364" height="521" fill="none">
      <path d={d} stroke="#4c4c48" strokeWidth="4" />
      <path d={d} stroke="#c9c6bf" strokeWidth="1.300" />
      <Port side="l" x={345} y={113} />
      <Port side="l" x={323} y={304.500} />
      {weather.map((_, i) => <Port key={i} side="r" x={883} y={175.500 + i * 17} />)}
      {[0, 1, 2].map((i) => <Port key={i} side="l" x={999} y={210 + i * 17} />)}
      <Port side="r" x={1080} y={227} />
      {graphIn.map((_, i) => <Port key={i} side="l" x={1161} y={226 + i * 18.850} />)}
      {graphOut.map((_, i) => <Port key={i} side="r" x={1331} y={225.500 + i * 17} />)}
    </svg>
  );
}

function Canvas() {
  return (
    <div className="relative h-[521px] w-[1364px] overflow-hidden">
      <Backdrop />

      <Version className="left-[350px] top-[125px] h-[25px] w-[106px]" />
      <div className="absolute left-[345px] top-[101px] flex h-[24px] w-[130px] items-center rounded-[3px] border border-[#222] bg-linear-to-b from-[#c6c6d2] to-[#9493a5] pl-[5px]">
        <Fit t="defaultFolder_" w={60} font={NODE} />
        <Icon n="ladybug" s={20} className="ml-[2px]" />
        <span className="ml-[5px] font-['Open_Sans'] text-[9px]">c</span>
      </div>

      <div className="absolute left-[320px] top-[200px] flex h-[19px] w-[140px] items-center rounded-[3px] border border-[#333] bg-linear-to-b from-[#c6c6d2] to-[#9493a5] pl-[8px]">
        <Fit t="Boolean Toggle" w={64} font={'9.500px "Open Sans", sans-serif'} className="h-[17px]" />
        <div className="ml-[10px] flex h-[17px] flex-1 items-start border border-[#111] bg-[#4b4b4b] pl-[2px] text-[#eee]">
          <Fit t="False" w={34} font={'bold 10px "Liberation Mono", monospace'} className="h-[15px] leading-[12px]!" />
        </div>
      </div>

      <div className="absolute left-[323px] top-[242px] flex h-[126px] w-[161px] flex-col rounded-[3px] border border-[#222] bg-[#fffa5a] shadow-[1px_1px_2px_rgba(0,0,0,0.4)]">
        <div className="flex h-[16px] items-start justify-center border-b border-[#555] bg-[#cbc849]">
          <Fit t="Panel" w={22} font={NODE} className="h-[15px] leading-[14px]!" />
        </div>
        <div className="flex h-[108px] flex-col items-center justify-center pr-[1px] font-['Liberation_Mono'] text-[9.400px] leading-[10.300px] whitespace-pre text-[#2e2d0a] [text-shadow:0.200px_0_0_#2e2d0a]">
          {["https://www.energypluss.org", "/weather- ", "download/south_america_wmo_", "_region_3/BRA//BRA_Sao.Paul", "r.832290_SWERA/all "].map((l) => (
            <div key={l}>{l}</div>
          ))}
        </div>
      </div>

      <Version className="left-[691px] top-[458px] h-[25px] w-[187px]" />
      <div className="absolute left-[686px] top-[148px] flex h-[310px] w-[197px] rounded-[3px] border border-[#222] bg-linear-to-b from-[#afaebe] to-[#8b8a9c]">
        <div className="flex w-[68px] items-center justify-end gap-[1px] pr-[2px] pb-px">
          <Fit t="File" w={14} font={NODE} />
          <Icon n="importer" s={24} />
        </div>
        <div className="flex flex-col pt-[17px] pl-px">
          {weather.map(([t, w]) => (
            <Fit key={t} t={t} w={w} font={NODE} className="h-[17px] leading-[17px]!" />
          ))}
        </div>
      </div>

      <div className="absolute left-[998px] top-[199px] flex h-[56px] w-[82px] items-center rounded-[3px] border border-[#222] bg-linear-to-b from-[#eee] to-[#bcbcbc] pl-[6px] shadow-[1px_1px_2px_rgba(0,0,0,0.35)]">
        <div className="flex flex-col pb-[2px]">
          {["D1", "D2", "D3"].map((t) => (
            <Fit key={t} t={t} w={11} font={NODE} className="h-[17px] leading-[17px]!" />
          ))}
        </div>
        <Icon n="merge" s={20} className="ml-[4px]" />
        <Fit t="Result" w={26} font={NODE} className="ml-[5px]" />
      </div>

      <Version className="left-[1166px] top-[389px] h-[25px] w-[160px]" />
      <div className="absolute left-[1161px] top-[215px] flex h-[174px] w-[170px] rounded-[3px] border border-[#222] bg-linear-to-b from-[#f3f3f3] to-[#bfbfbf] shadow-[1px_1px_2px_rgba(0,0,0,0.35)]">
        <div className="pl-[2px] pt-[4px]">
          <div className="flex size-[12px] items-center justify-center rounded-[2px] border border-[#555] bg-[#ddd]">
            <svg width="9" height="9" fill="none" stroke="#333"><path d="M4.500 0v8M1 4.500L4.500 8 8 4.500" /></svg>
          </div>
        </div>
        <div className="flex w-[58px] flex-col items-end pt-[1px]">
          {graphIn.map(([t, w]) => (
            <Fit key={t} t={t} w={w} font={NODE} className="h-[18.850px] leading-[18.850px]!" />
          ))}
        </div>
        <Icon n="curve" s={21} className="ml-[4px] mt-[75px]" />
        <div className="ml-[4px] flex flex-col">
          {graphOut.map(([t, w]) => (
            <Fit key={t} t={t} w={w} font={NODE} className="h-[17px] leading-[17px]!" />
          ))}
        </div>
      </div>

      <Wires />

      <div className="absolute left-[1px] top-[494px] flex h-[27px] w-[148px] items-center gap-[4px] border border-[#111] bg-linear-to-b from-[#eee] to-[#999] pl-[2px]">
        {["merge", "arcdim", "orange", "yz", "scribble"].map((n) => (
          <Icon key={n} n={n} />
        ))}
      </div>

      <svg className="absolute left-[1300px] top-[470px]" width="60" height="49">
        <defs>
          <radialGradient id="knob"><stop offset="0" stopColor="#f4f4f4" /><stop offset="1" stopColor="#b5b5b5" /></radialGradient>
        </defs>
        <path d="M6 6l5-1 5 2 1-2 4 2-5 8-2-4-4 1Z" fill="#000" />
        <circle cx="26" cy="6.500" r="3" fill="#000" />
        <circle cx="43.500" cy="6.500" r="3" fill="#000" />
        <circle cx="34.500" cy="22" r="20.300" fill="#333" />
        <circle cx="34.500" cy="22" r="19.300" fill="#fff" />
        <circle cx="34.500" cy="22" r="17.500" fill="url(#knob)" stroke="#888" strokeWidth=".5" />
        <path d="M40 5l0 7 6-4ZM18 12l1 7 5-4ZM47 29l6-2-2 6ZM24 38l6-3 0 6Z" fill="#fff" />
      </svg>
    </div>
  );
}

function TreeMenu() {
  return (
    <div className="absolute left-[441px] top-[149px] flex h-[404px] w-[274px] flex-col rounded-t-[3px] border border-[#777] bg-[#f0f0f0]">
      <div className="flex h-[13px] shrink-0 items-start rounded-t-[2px] bg-[#171717] pl-[15px] text-[#777]">
        <span className="flex h-[11px] -scale-y-100">
          <Fit t="Tree" w={20} font={'11px "Open Sans", sans-serif'} className="h-[11px] leading-[11px]! opacity-75" />
        </span>
        <svg width="9" height="9" className="ml-[14px] mt-[1px]"><path d="M4.500 1v7M1.500 4.500h6M2.500 3.500l2-2 2 2" stroke="#777" fill="none" /></svg>
      </div>
      <div className="flex flex-col pt-[1px]">
        {menuSections.map((rows, i) => (
          <React.Fragment key={i}>
            {i > 0 && (
              <div className="flex h-[10px] items-center px-[24px]">
                <div className="h-[2px] flex-1 border-b border-white bg-linear-to-r from-transparent via-[#d0d0d0] to-transparent" />
              </div>
            )}
            {rows.map((row) => (
              <div key={row[0][1]} className="grid h-[26px] grid-cols-2">
                {row.map(([icon, label, w]) => (
                  <div key={label} className={"flex items-center gap-[9px] pl-[1px] " + (label === "Merge" ? "bg-[#a9b4c9]" : "")}>
                    <Icon n={icon} />
                    <Fit t={label} w={w} font={SANS} />
                  </div>
                ))}
              </div>
            ))}
          </React.Fragment>
        ))}
      </div>
    </div>
  );
}

function Taskbar() {
  const slot = "flex h-[30px] w-[37px] items-center justify-center border-b-2 ";
  return (
    <div className="flex h-[30px] items-center bg-[#101010] text-white">
      <svg className="ml-[10px]" width="16" height="16" fill="#fff"><path d="M0 2.300L6.500 1.400v6.200H0ZM7.300 1.300L16 0v7.600H7.300ZM0 8.400h6.500v6.200L0 13.700ZM7.300 8.400H16V16l-8.700-1.300Z" /></svg>
      <div className="ml-[546px] flex">
        <div className={slot + "border-transparent"}>
          <svg width="18" height="18" viewBox="0 0 18 18"><circle cx="9" cy="9.500" r="8" fill="#f4542a" /><path d="M9 1c5 1 9 5 8 10-1 3-3 5-6 6 4-5 2-9-2-9 2-2 1-5 0-7Z" fill="#ffc52e" /><circle cx="8.500" cy="10" r="4" fill="#6d4ad8" /><path d="M1 8c2-3 5-3 8-1-3 0-4 2-3 4-3 0-4-1-5-3Z" fill="#ff9631" /></svg>
        </div>
        <div className={slot + "border-transparent"}>
          <svg width="18" height="16"><rect x="1" y="1" width="16" height="10.500" fill="#53b9ef" stroke="#c3e8fb" /><path d="M9 12v2M4 14.500h10" stroke="#ddd" strokeWidth="1.400" /></svg>
        </div>
        <div className={slot + "border-[#8fc5ea] bg-[#3b3b3b]"}>
          <svg width="22" height="22"><path d="M2 4c2 1 3 2 4 5l3-4 2 5 4-1-3 5 2 6-5-4-4-1c-2-2-4-6-3-11Z" fill="#fff" /><path d="M8 10l3 4-1-5" fill="#222" /><text x="14" y="9" fontSize="9" fill="#fff" fontFamily="Liberation Sans">6</text></svg>
        </div>
        <div className={slot + "border-[#6cb1e0]"}>
          <svg width="18" height="18"><path d="M13 1l4 2v12l-4 2L5 10l-3 2-1-1 3-2-3-2 1-1 3 2ZM13 5L8 9l5 4Z" fill="#2ba1ea" fillRule="evenodd" /></svg>
        </div>
        <div className={slot + "border-[#6cb1e0]"}>
          <svg width="18" height="16"><path d="M1 1h6l1 2h9v12H1Z" fill="#f7cf5b" /><path d="M1 6h16v9H1Z" fill="#ffe491" /><path d="M5 10h8v5h-2v-2H7v2H5Z" fill="#3795dc" /></svg>
        </div>
        <div className={slot + "border-[#6cb1e0]"}>
          <svg width="16" height="14"><rect width="16" height="14" fill="#1572cf" /><path d="M1 12l5-6 3 4 2-2 4 4Z" fill="#bfe3ff" /><circle cx="12" cy="4" r="1.300" fill="#fff" /></svg>
        </div>
      </div>
      <svg className="ml-auto" width="92" height="20" fill="none" stroke="#fff" strokeWidth="1.200">
        <path d="M4 13l6-6 6 6" />
        <path d="M30 17A12 12 0 0 1 42 6M33 17a9 9 0 0 1 9-8M36 17a6 6 0 0 1 6-5" opacity=".85" />
        <circle cx="40.500" cy="16" r="1.300" fill="#fff" stroke="none" />
        <path d="M50 8h3l4-4v13l-4-4h-3ZM60 8c1.500 2 1.500 3 0 5M62 6c3 3 3 6 0 9M65 4c4 4 4 9 0 13" />
        <path d="M79 4l4 2.500L79 9l-4-2.500ZM87 4l4 2.500L87 9l-4-2.500ZM79 9l4 2.500-4 2.500-4-2.500ZM87 9l4 2.500-4 2.500-4-2.500ZM83 13.500l4 2.500-4 2.500-4-2.500Z" fill="#fff" stroke="none" />
      </svg>
      <div className="ml-[5px] flex w-[58px] flex-col items-center">
        <Fit t="11:55:21" w={41} font={'11.500px "Open Sans", sans-serif'} className="h-[14px] leading-[14px]!" />
        <Fit t="sex 09 out" w={53} font={'11.500px "Open Sans", sans-serif'} className="h-[14px] leading-[14px]!" />
      </div>
      <svg className="ml-[17px]" width="17" height="17"><path d="M0 1h17v12h-6l-2.500 3L6 13H0Z" fill="#fff" /><path d="M3 4.500h11M3 7.500h11M3 10.500h7" stroke="#111" /></svg>
      <div className="ml-[19px] mr-[4px] h-[30px] w-px bg-[#555]" />
    </div>
  );
}

function Annotation() {
  return (
    <svg className="pointer-events-none absolute left-[690px] top-[255px]" width="370" height="135" viewBox="690 255 370 135" fill="none" stroke="#e41e1e" strokeWidth="6" strokeLinecap="round" strokeLinejoin="round">
      <path d="M720 303.500C729 296 752 284 780 274C799 269 822 266.700 840 266.700C869 266.700 918 267 947 279C960 286 974 293 983 303C998 318 1007 330 1014 341C1020 351 1025 359 1028 368" />
      <path d="M716.500 288C709 297 706 303 703 311C702 315 705 316.500 711 318L734 325.500" />
      <path d="M999 357C1007 360 1012 370 1021 375.500C1027 379 1030 378 1032 372C1035 362 1037 354 1041 344.500" />
    </svg>
  );
}

export default function App() {
  return (
    <div className="relative flex h-[768px] w-[1366px] flex-col overflow-hidden bg-[#f0f0f0] text-black">
      <Titlebar />
      <div className="flex h-[27px] items-center gap-[19px] bg-linear-to-r from-[#f0f0f0] to-[#fbfbfb] pl-[13px] pr-[10px]">
        {menus.map(([t, w]) => (
          <Fit key={t} t={t} w={w} font={UI} />
        ))}
        <Fit t="unnamed" w={51} font={UI} className="ml-auto" />
      </div>
      <Tabs />
      <Ribbon />
      <Toolbar />
      <Canvas />
      <div className="flex h-[25px] items-center justify-between border-t border-[#ccc] pl-[7px] pr-[32px] shadow-[inset_0_1px_0_#fff]">
        <span className="font-['Open_Sans'] text-[12px] text-black">...</span>
        <Fit t="1.0.0007" w={42} font={UI} className="text-[#777]" />
      </div>
      <Taskbar />
      <TreeMenu />
      <div className="absolute left-[711px] top-[332px] flex h-[36px] w-[177px] flex-col border border-[#767676] bg-white pl-[5px] pt-[1px] text-[#555] shadow-[3px_3px_2px_rgba(0,0,0,0.45)]">
        <Fit t="Merge" w={37} font={'bold 12px "Open Sans", sans-serif'} />
        <Fit t="Merge a bunch of data streams" w={164} font={UI} />
      </div>
      <Annotation />
    </div>
  );
}
